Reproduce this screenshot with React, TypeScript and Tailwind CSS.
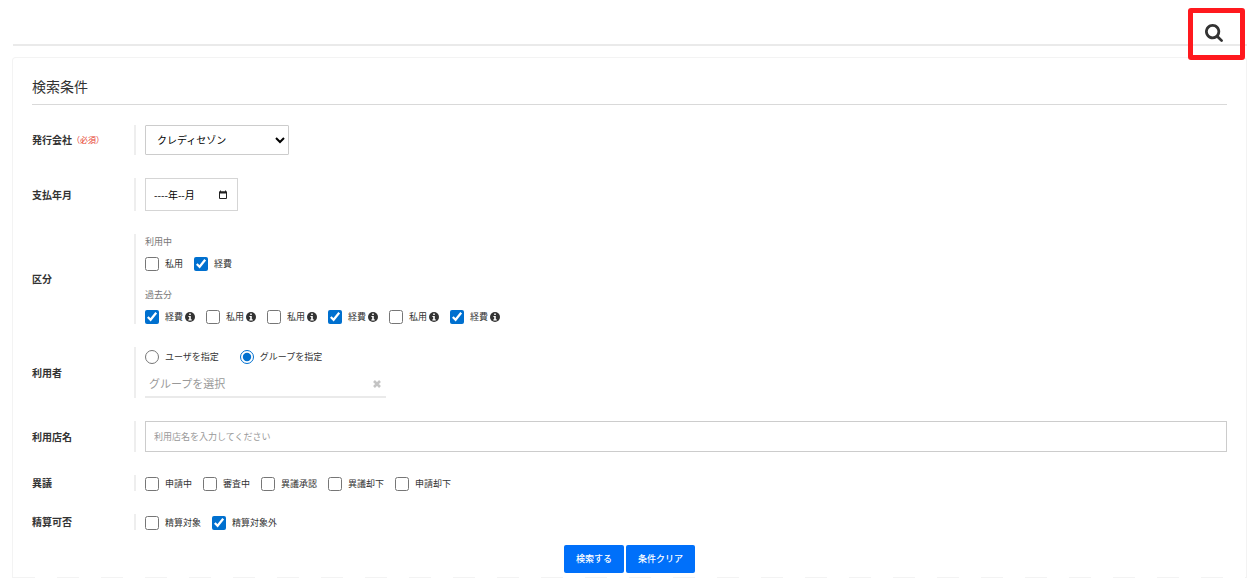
import type { ReactNode } from "react";

interface Option {
  label: string;
  checked?: boolean;
  info?: boolean;
}

const currentTypes: Option[] = [{ label: "私用" }, { label: "経費", checked: true }];

const pastTypes: Option[] = [
  { label: "経費", checked: true, info: true },
  { label: "私用", info: true },
  { label: "私用", info: true },
  { label: "経費", checked: true, info: true },
  { label: "私用", info: true },
  { label: "経費", checked: true, info: true },
];

const objections: Option[] = [
  { label: "申請中" },
  { label: "審査中" },
  { label: "異議承認" },
  { label: "異議却下" },
  { label: "申請却下" },
];

const settlements: Option[] = [{ label: "精算対象" }, { label: "精算対象外", checked: true }];

const SearchIcon = () => (
  <svg viewBox="0 0 1664 1664" className="h-[18px] w-[18px]" fill="currentColor" aria-hidden="true">
    <path
      transform="translate(0 -128)"
      d="M1152 832q0-185-131.5-316.5T704 384 387.5 515.5 256 832t131.5 316.5T704 1280t316.5-131.5T1152 832zm512 832q0 52-38 90t-90 38q-54 0-90-38l-343-342q-179 124-399 124-143 0-273.5-55.5t-225-150-150-225T0 832t55.5-273.5 150-225 225-150T704 128t273.5 55.5 225 150 150 225T1408 832q0 220-124 399l343 343q37 37 37 90z"
    />
  </svg>
);

const InfoIcon = () => (
  <svg viewBox="0 0 10 10" className="ml-0.5 h-2.5 w-2.5" aria-hidden="true">
    <circle cx="5" cy="5" r="5" fill="currentColor" />
    <path d="M4.2 1.5h1.6v1.4H4.2zM3.4 3.9h2.4v3.3h.9v1.2H3.4V7.2h.8V5.1h-.8z" fill="#fff" />
  </svg>
);

const CalendarIcon = () => (
  <svg viewBox="0 0 10 10" className="h-2.5 w-2.5" aria-hidden="true">
    <path d="M1.5 2h7v6.5h-7z" fill="none" stroke="#222" />
    <path d="M1 1.5h8v2H1zM2 .5h1v1H2zM7 .5h1v1H7z" fill="#222" />
  </svg>
);

const ClearIcon = () => (
  <svg viewBox="0 0 10 10" className="h-2.5 w-2.5" aria-hidden="true">
    <path d="M2 2l6 6M8 2l-6 6" stroke="#c4c4c4" strokeWidth="2.6" />
  </svg>
);

const Row = ({ label, required, children }: { label: string; required?: boolean; children: ReactNode }) => (
  <div role="group" aria-label={label} className="flex items-stretch">
    <div className="flex w-[102px] shrink-0 items-center text-[10px] leading-4 font-bold whitespace-nowrap">
      {label}
      {required && <span className="text-[8px] font-normal text-[#e5392b]">（必須）</span>}
    </div>
    <div className="min-w-0 flex-1 border-l-2 border-[#eee] pl-[9px]">{children}</div>
  </div>
);

const CheckList = ({ options }: { options: Option[] }) => (
  <div className="flex flex-wrap gap-x-[11px]">
    {options.map((option, i) => (
      <label key={i} className="flex items-center text-[9px] leading-[14px]">
        <input
          type="checkbox"
          defaultChecked={option.checked}
          className="mr-1.5 h-[14px] w-[14px] accent-[#0070cf]"
        />
        {option.label}
        {option.info && <InfoIcon />}
      </label>
    ))}
  </div>
);

const App = () => {
  return (
    <div className="bg-white pr-[7px] pl-3 font-['Noto_Sans_CJK_JP',sans-serif] text-[#333]" lang="ja">
      <header className="relative ml-px h-[46px] border-b-2 border-[#eaeaea]">
        <button
          type="button"
          aria-label="検索"
          className="absolute top-2 right-0.5 flex h-[52px] w-[57px] items-center justify-center rounded-[3px] border-5 border-[#ff191e] pr-1.5 pb-0.5"
        >
          <SearchIcon />
        </button>
      </header>

      <main className="mt-[11px] rounded-t border border-b-0 border-[#f3f3f3] pt-[18px]">
        <form className="px-[19px] pb-1" onSubmit={(e) => e.preventDefault()}>
          <h2 className="border-b border-[#d9d9d9] pb-2 text-sm leading-5">検索条件</h2>

          <div className="mt-5 flex flex-col gap-[23px]">
            <Row label="発行会社" required>
              <select
                aria-label="発行会社"
                className="block h-[30px] w-36 rounded-[1px] border border-[#ccc] bg-white pb-0.5 pl-[7px] text-[10px] text-black"
              >
                <option>クレディセゾン</option>
              </select>
            </Row>

            <Row label="支払年月">
              <div className="flex h-[33px] w-[93px] items-center justify-between border border-[#d5d5d5] pr-[9px] pl-2">
                <input
                  type="text"
                  aria-label="支払年月"
                  placeholder="----年--月"
                  className="w-14 text-[10px] outline-none placeholder:text-black"
                />
                <button type="button" aria-label="カレンダー">
                  <CalendarIcon />
                </button>
              </div>
            </Row>

            <Row label="区分">
              <p className="mb-2 text-[9px] leading-[15px] text-[#777]">利用中</p>
              <CheckList options={currentTypes} />
              <p className="mt-4 mb-2 text-[9px] leading-[15px] text-[#777]">過去分</p>
              <CheckList options={pastTypes} />
            </Row>

            <Row label="利用者">
              <div className="flex h-5 items-center gap-[21px] text-[9px]">
                <label className="flex items-center gap-1.5">
                  <input type="radio" name="target" className="h-[14px] w-[14px] accent-[#0070cf]" />
                  ユーザを指定
                </label>
                <label className="flex items-center gap-1.5">
                  <input type="radio" name="target" defaultChecked className="h-[14px] w-[14px] accent-[#0070cf]" />
                  グループを指定
                </label>
              </div>
              <div className="flex h-[31px] w-[241px] items-center border-b-2 border-[#eaeaea] px-1 pt-1">
                <input
                  type="text"
                  aria-label="グループ"
                  placeholder="グループを選択"
                  className="min-w-0 flex-1 text-[11px] outline-none placeholder:text-[#999]"
                />
                <button type="button" aria-label="クリア">
                  <ClearIcon />
                </button>
              </div>
            </Row>

            <Row label="利用店名">
              <input
                type="text"
                aria-label="利用店名"
                placeholder="利用店名を入力してください"
                className="block h-[31px] w-full border border-[#ccc] px-2 text-[9px] placeholder:text-[#999]"
              />
            </Row>

            <Row label="異議">
              <div className="pt-0.5">
                <CheckList options={objections} />
              </div>
            </Row>

            <Row label="精算可否">
              <div className="pt-0.5">
                <CheckList options={settlements} />
              </div>
            </Row>
          </div>

          <div className="mt-[15px] flex justify-center gap-0.5 text-[9px] font-medium text-white">
            <button type="submit" className="h-7 rounded-xs bg-[#0070fa] px-3">
              検索する
            </button>
            <button type="reset" className="h-7 rounded-xs bg-[#0070fa] px-3">
              条件クリア
            </button>
          </div>
        </form>
        <div className="h-px bg-[repeating-linear-gradient(90deg,#f3f3f3_0_22px,transparent_22px_44px)]" />
      </main>
    </div>
  );
};

export default App;
